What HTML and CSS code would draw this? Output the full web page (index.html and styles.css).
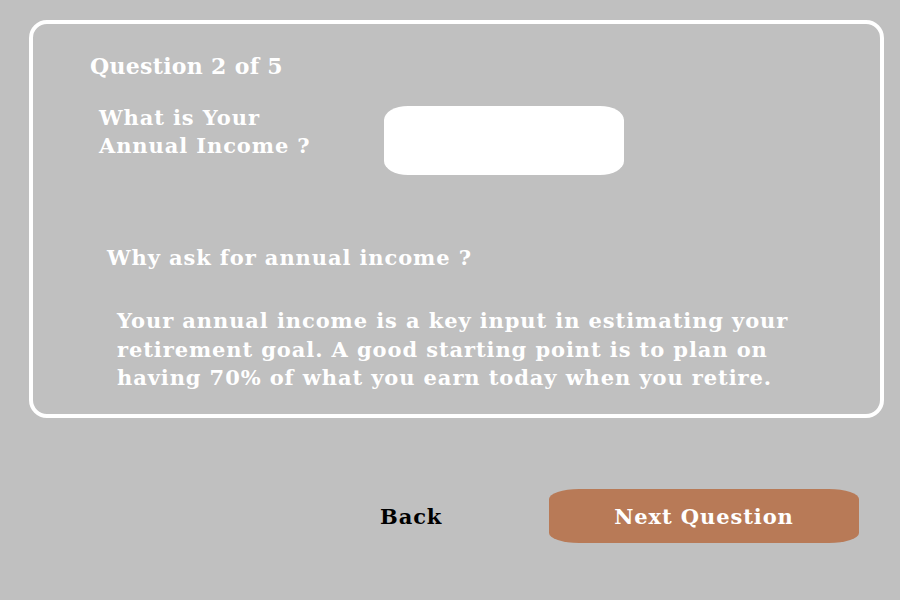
FILE: index.html
```html
<!DOCTYPE html>
<html lang="en">
<head>
  <meta charset="UTF-8" />
  <title>Retirement Planner</title>
  <link rel="stylesheet" href="styles.css">
</head>
<body>
  <section class="card">
    <h2 class="step">Question 2 of 5</h2>

    <div class="question-row">
      <label class="question" for="income">What is Your<br>Annual Income ?</label>
      <input class="answer" id="income" type="text" />
    </div>

    <h3 class="why">Why ask for annual income ?</h3>
    <p class="explain">
      Your annual income is a key input in estimating your<br>
      retirement goal. A good starting point is to plan on<br>
      having 70% of what you earn today when you retire.
    </p>
  </section>

  <div class="actions">
    <button class="back">Back</button>
    <button class="next">Next Question</button>
  </div>
</body>
</html>
```

FILE: styles.css
```css
:root {
  --bg-color: #c0c0c0;
  --text-light: #ffffff;
  --accent-color: #b87a57;
}

* {
  margin: 0;
  padding: 0;
  box-sizing: border-box;
  font-family: 'DejaVu Serif', 'Liberation Serif', serif;
  font-weight: bold;
  letter-spacing: 0.9px;
}

body {
  background-color: var(--bg-color);
  width: 900px;
  height: 600px;
  overflow: hidden;
}

.card {
  margin: 20px 0 0 29px;
  width: 855px;
  height: 398px;
  border: 4px solid var(--text-light);
  border-radius: 18px;
  color: var(--text-light);
  padding: 28px 0 0 57px;
}

.step {
  font-size: 22px;
  line-height: 28px;
  letter-spacing: 0.3px;
}

.question-row {
  display: flex;
  align-items: flex-start;
  margin-top: 26px;
  padding-left: 9px;
}

.question {
  display: block;
  width: 285px;
  font-size: 21px;
  line-height: 28px;
  margin-top: -2px;
}

.answer {
  width: 240px;
  height: 69px;
  border: none;
  background: var(--text-light);
  border-radius: 24px / 14px;
  outline: none;
}

.why {
  font-size: 21px;
  line-height: 28px;
  margin: 69px 0 0 17px;
}

.explain {
  font-size: 21px;
  line-height: 28.5px;
  margin: 35px 0 0 27px;
}

.actions {
  display: flex;
  align-items: center;
  margin-top: 71px;
  padding-left: 380px;
}

.back {
  background: none;
  border: none;
  color: #000;
  font-size: 21px;
  width: 169px;
  text-align: left;
}

.next {
  width: 310px;
  height: 54px;
  background-color: var(--accent-color);
  color: var(--text-light);
  border: none;
  border-radius: 30px / 10px;
  font-size: 21px;
}
```
